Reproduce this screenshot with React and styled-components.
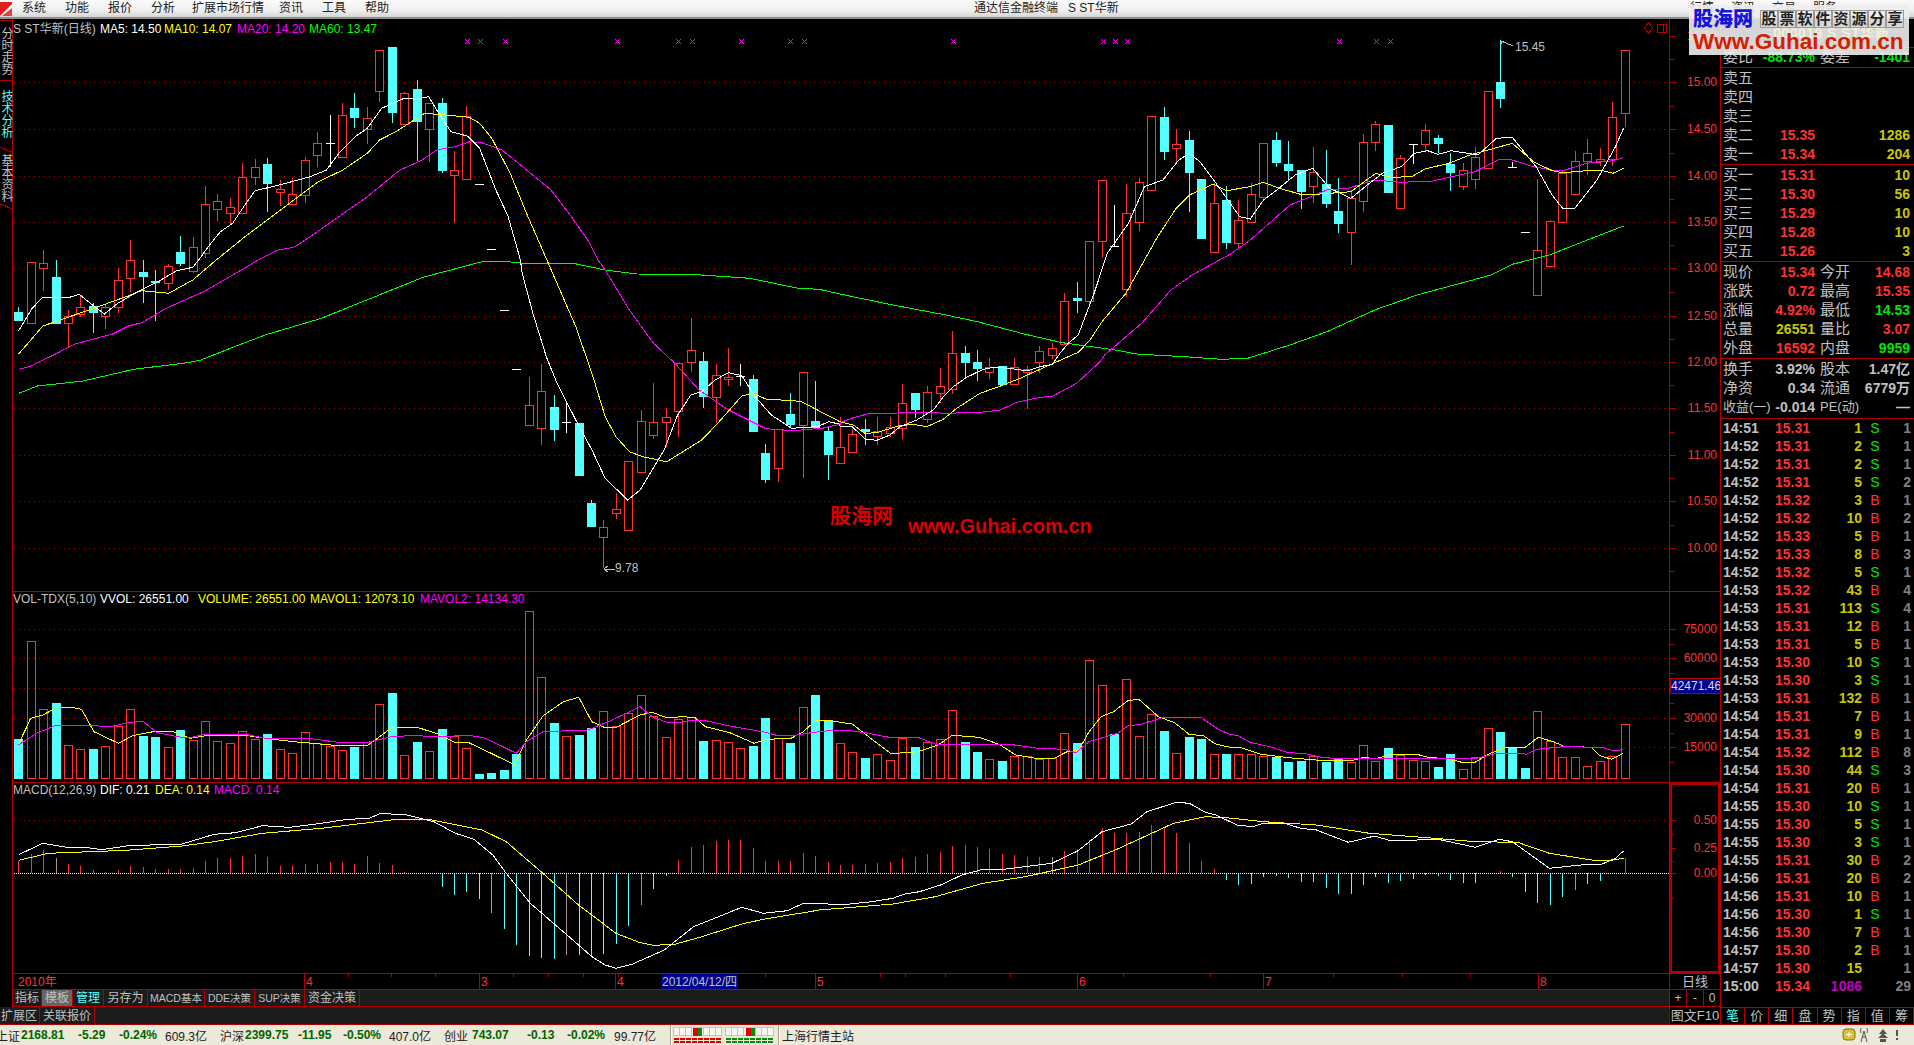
import React from 'react'
import styled, { createGlobalStyle } from 'styled-components'

const LINE = '#b00000'
const UP = '#ff3232'
const DOWN = '#54ffff'
const CJK = '"Liberation Sans", "Noto Sans CJK SC", sans-serif'
const THIN = '1'

const GlobalStyle = createGlobalStyle`
    html, body {
        margin: 0;
        padding: 0;
        background: #000;
        overflow: hidden;
    }
    * {
        box-sizing: border-box;
    }
`

// every polyline was read off the reference in its own crop, so each has its own scale
const crop1 = (p) => [p[0] / 2.45, p[1] / 3]
const crop8 = (p) => [p[0] / 1.867, 240 + p[1] / 3]
const crop9 = (p) => [840 + p[0] / 1.889, 20 + p[1] / 3]
const crop12 = (p) => [820 + p[0] / 3, 340 + p[1] / 3]
const vol5 = (p) => [p[0] / 2.45, 590 + p[1] / 3]
const vol6 = (p) => [640 + p[0] / 2.45, 590 + p[1] / 3]
const vol7 = (p) => [1230 + p[0] / 3, 590 + p[1] / 3]
const macd10 = (p) => [p[0] / 1.867, 780 + p[1] / 3]
const macd11 = (p) => [840 + p[0] / 1.889, 780 + p[1] / 3]

const toPoints = (...parts) => parts
    .map(([fn, list]) => list.map((p) => fn(p).map((v) => v.toFixed(1)).join(',')).join(' '))
    .join(' ')

const MA5 = toPoints(
    [crop8, [[35, 272], [60, 205], [80, 172], [130, 172], [148, 163], [175, 198], [195, 222], [220, 190], [260, 152], [300, 120], [330, 92], [360, 82]]],
    [crop1, [[490, 775], [510, 740], [540, 695], [570, 670], [600, 615], [625, 572], [650, 565], [700, 550], [760, 530], [800, 510], [830, 460], [870, 410], [900, 385], [935, 325], [990, 295], [1020, 298], [1050, 290], [1075, 340], [1105, 395], [1145, 408], [1175, 445], [1215, 570], [1245, 650], [1275, 780]]],
    [crop8, [[975, 100], [995, 220], [1020, 350], [1040, 430], [1075, 540], [1105, 630], [1130, 715], [1172, 780], [1195, 750], [1240, 630], [1265, 525], [1290, 465], [1310, 455], [1335, 420], [1360, 398], [1385, 407], [1410, 470], [1440, 525], [1478, 565], [1525, 560], [1548, 545], [1568, 553]]],
    [crop12, [[60, 258], [97, 260], [135, 297], [170, 301], [210, 285], [240, 260], [290, 240], [340, 210], [370, 170], [400, 140], [440, 112], [490, 88], [520, 82], [570, 85], [620, 93], [660, 80], [697, 73], [720, 40], [745, 10]]],
    [crop9, [[450, 945], [480, 820], [505, 700], [545, 610], [575, 500], [610, 480], [640, 420], [660, 400], [680, 425], [715, 500], [755, 590], [775, 597], [800, 540], [825, 510], [860, 465], [893, 445], [925, 505], [965, 535], [1000, 490], [1025, 460], [1060, 440], [1085, 400], [1110, 392], [1130, 403], [1155, 392], [1205, 405], [1240, 355], [1270, 352], [1315, 440], [1345, 525], [1365, 565], [1388, 565], [1430, 480], [1465, 380], [1480, 325]]],
)

const MA10 = toPoints(
    [crop8, [[35, 342], [80, 258], [130, 230], [175, 205], [235, 170], [265, 152], [315, 160], [360, 120], [400, 65]]],
    [crop1, [[535, 775], [600, 710], [720, 600], [780, 545], [840, 510], [900, 460], [930, 420], [970, 395], [1040, 340], [1090, 345], [1150, 352], [1175, 370], [1205, 415], [1250, 520], [1290, 640], [1340, 780]]],
    [crop8, [[1040, 130], [1075, 260], [1105, 400], [1130, 530], [1150, 590], [1175, 635], [1200, 650], [1245, 665], [1310, 600], [1340, 550], [1385, 468], [1405, 460], [1430, 477], [1495, 484], [1568, 545]]],
    [crop12, [[60, 245], [100, 255], [135, 280], [170, 278], [235, 258], [280, 253], [320, 260], [370, 238], [410, 205], [480, 160], [550, 135], [600, 115], [700, 70], [775, 37], [810, 0]]],
    [crop9, [[495, 905], [540, 820], [570, 735], [600, 650], [635, 565], [660, 525], [705, 492], [730, 512], [775, 500], [800, 487], [830, 505], [870, 523], [900, 523], [965, 515], [1012, 460], [1040, 472], [1080, 470], [1105, 447], [1150, 430], [1190, 405], [1270, 370], [1310, 425], [1345, 452], [1365, 458], [1410, 452], [1440, 452], [1460, 460], [1480, 445]]],
)

const MA20 = toPoints(
    [crop8, [[35, 388], [55, 380], [100, 345], [140, 312], [210, 282], [240, 258], [265, 248], [310, 205], [380, 155], [440, 100]]],
    [crop1, [[640, 775], [680, 750], [720, 742], [760, 710], [830, 650], [900, 590], [930, 560], [980, 510], [1030, 483], [1070, 450], [1115, 440], [1150, 425], [1180, 428], [1230, 450], [1300, 520], [1350, 570], [1400, 650], [1440, 720], [1465, 780]]],
    [crop8, [[1130, 90], [1175, 210], [1220, 310], [1260, 370], [1305, 450], [1360, 510], [1410, 550], [1430, 566], [1480, 572], [1535, 565], [1568, 553]]],
    [crop12, [[60, 248], [100, 233], [150, 220], [235, 219], [300, 217], [385, 220], [490, 216], [540, 210], [590, 187], [660, 172], [697, 169], [770, 130], [840, 65]]],
    [crop9, [[500, 1005], [570, 910], [625, 810], [665, 765], [740, 700], [775, 660], [850, 555], [920, 510], [960, 505], [1010, 480], [1060, 487], [1120, 483], [1170, 465], [1200, 455], [1245, 418], [1270, 420], [1310, 440], [1345, 450], [1370, 450], [1410, 430], [1460, 422], [1480, 413]]],
)

const MA60 = toPoints(
    [crop8, [[35, 460], [70, 438], [155, 423], [250, 388], [350, 368], [375, 360], [430, 325], [495, 285], [600, 235], [700, 170], [790, 112], [900, 65], [950, 65], [975, 70], [1070, 70], [1130, 90], [1190, 102], [1300, 104], [1400, 115], [1490, 145], [1530, 148], [1568, 162]]],
    [crop9, [[100, 855], [200, 885], [260, 905], [350, 943], [420, 968], [520, 990], [560, 1002], [650, 1010], [720, 1018], [770, 1015], [850, 975], [920, 935], [1010, 870], [1090, 825], [1160, 795], [1230, 765], [1270, 733], [1340, 705], [1420, 655], [1480, 618]]],
)

const MAVOL1 = toPoints(
    [vol5, [[45, 462], [62, 420], [75, 385], [105, 375], [140, 352], [175, 352], [200, 358], [230, 425], [290, 460], [325, 437], [375, 425], [425, 425], [465, 445], [510, 436], [600, 436], [660, 447], [720, 455], [830, 467], [900, 467], [960, 413], [1020, 411], [1075, 433], [1115, 458], [1145, 456], [1190, 482], [1260, 524], [1290, 450], [1330, 378], [1380, 335], [1418, 322], [1450, 395], [1480, 412], [1510, 412]]],
    [vol6, [[0, 375], [30, 367], [65, 383], [105, 380], [135, 383], [160, 410], [220, 428], [280, 460], [310, 448], [370, 445], [400, 425], [430, 392], [465, 392], [520, 402], [560, 440], [615, 491], [680, 485], [730, 465], [765, 436], [830, 442], [880, 463], [920, 495], [970, 505], [1015, 505], [1045, 486], [1075, 480], [1100, 425], [1130, 380], [1160, 365], [1195, 332], [1222, 328], [1270, 380], [1310, 398], [1345, 433], [1380, 437], [1410, 462]]],
    [vol7, [[0, 472], [30, 472], [90, 492], [150, 500], [195, 505], [270, 511], [370, 511], [395, 503], [440, 505], [490, 493], [560, 493], [600, 503], [640, 505], [680, 513], [695, 517], [735, 517], [780, 490], [830, 472], [885, 472], [925, 442], [970, 455], [1000, 468], [1050, 470], [1085, 473], [1110, 497], [1145, 508], [1180, 490]]],
)

const MAVOL2 = toPoints(
    [vol5, [[45, 465], [90, 430], [135, 407], [235, 407], [265, 411], [320, 397], [350, 394], [385, 428], [440, 441], [470, 442], [500, 433], [600, 433], [650, 445], [760, 446], [830, 457], [900, 457], [960, 440], [1020, 436], [1060, 441], [1150, 436], [1190, 445], [1265, 490], [1290, 455], [1330, 425], [1440, 420], [1500, 390]]],
    [vol6, [[0, 350], [30, 380], [65, 397], [100, 397], [130, 390], [165, 393], [220, 408], [300, 425], [335, 436], [380, 436], [420, 428], [470, 421], [510, 421], [560, 430], [610, 442], [680, 442], [730, 465], [870, 463], [905, 463], [975, 475], [1040, 478], [1068, 488], [1100, 455], [1170, 430], [1195, 408], [1230, 402], [1280, 383], [1375, 383], [1420, 420]]],
    [vol7, [[0, 433], [25, 437], [60, 457], [120, 470], [170, 487], [230, 492], [280, 503], [320, 505], [640, 505], [740, 505], [800, 490], [870, 490], [890, 493], [920, 478], [970, 473], [1000, 470], [1115, 472], [1145, 481], [1165, 481], [1180, 478]]],
)

const DIF = toPoints(
    [macd10, [[35, 224], [80, 190], [125, 202], [160, 202], [190, 209], [240, 197], [340, 192], [400, 163], [440, 158], [490, 137], [540, 142], [590, 132], [650, 118], [690, 115], [710, 100], [760, 105], [810, 125], [850, 160], [885, 178], [920, 225], [945, 280], [990, 370], [1055, 460], [1105, 530], [1130, 555], [1150, 565], [1180, 553], [1240, 510], [1295, 440], [1385, 382], [1425, 400], [1470, 392], [1500, 370], [1530, 370]]],
    [macd11, [[0, 375], [60, 365], [100, 355], [120, 343], [150, 335], [190, 315], [230, 285], [270, 268], [310, 268], [400, 250], [450, 212], [495, 155], [550, 132], [580, 95], [635, 67], [660, 70], [690, 97], [710, 105], [750, 135], [780, 140], [800, 130], [840, 130], [870, 145], [900, 150], [960, 187], [1010, 168], [1035, 180], [1090, 180], [1130, 178], [1200, 202], [1245, 178], [1270, 185], [1340, 265], [1400, 255], [1440, 252], [1465, 235], [1480, 213]]],
)

const DEA = toPoints(
    [macd10, [[35, 241], [90, 220], [235, 211], [340, 198], [400, 185], [490, 160], [600, 145], [730, 120], [800, 118], [900, 150], [945, 185], [1010, 275], [1080, 375], [1150, 460], [1195, 488], [1220, 496], [1260, 493], [1310, 470], [1385, 432], [1425, 418], [1500, 398], [1530, 390]]],
    [macd11, [[0, 385], [100, 372], [180, 350], [270, 310], [350, 290], [450, 255], [520, 210], [630, 130], [690, 110], [730, 113], [800, 125], [900, 135], [1000, 160], [1100, 172], [1200, 185], [1280, 187], [1340, 220], [1420, 240], [1460, 240], [1480, 235]]],
)

// kind, high, body top, body bottom, low as page y
const CANDLES = [
    ['c', 307, 312, 321, 321], ['r', 262, 262, 323, 323], ['r', 250, 263, 268, 291], ['c', 260, 277, 324, 324], ['r', 310, 316, 323, 347],
    ['r', 295, 307, 314, 317], ['c', 303, 306, 313, 333], ['r', 305, 307, 316, 329], ['r', 268, 280, 307, 313], ['r', 240, 260, 278, 292],
    ['c', 260, 272, 277, 303], ['c', 270, 281, 283, 321], ['r', 264, 266, 283, 290], ['c', 236, 252, 264, 266], ['r', 237, 247, 271, 273],
    ['r', 186, 204, 253, 258], ['r', 194, 201, 209, 221], ['r', 198, 207, 213, 224], ['r', 163, 177, 213, 213], ['r', 159, 167, 177, 185],
    ['c', 158, 164, 184, 212], ['r', 180, 189, 192, 206], ['r', 178, 194, 204, 204], ['r', 157, 160, 195, 203], ['r', 132, 143, 155, 167],
    ['w', 115, 143, 143, 167], ['r', 103, 115, 157, 157], ['c', 93, 108, 118, 128], ['r', 107, 118, 129, 144], ['r', 50, 50, 91, 102],
    ['c', 47, 47, 113, 123], ['r', 92, 93, 124, 124], ['c', 80, 89, 122, 161], ['r', 103, 103, 129, 162], ['c', 98, 103, 171, 173],
    ['r', 151, 170, 175, 223], ['r', 106, 116, 179, 179], ['w', 184, 184, 184, 184], ['w', 249, 249, 249, 249], ['w', 310, 310, 310, 310],
    ['w', 369, 369, 369, 369], ['r', 377, 405, 425, 425], ['r', 364, 391, 428, 445], ['c', 395, 407, 430, 441], ['w', 403, 422, 422, 433],
    ['c', 423, 423, 476, 476], ['c', 500, 503, 527, 527], ['r', 520, 527, 537, 568], ['r', 493, 509, 513, 519], ['r', 461, 461, 530, 530],
    ['r', 410, 421, 472, 472], ['r', 383, 422, 435, 439], ['r', 408, 417, 422, 447], ['r', 363, 363, 411, 437], ['r', 318, 350, 362, 372],
    ['c', 352, 361, 397, 408], ['r', 364, 375, 397, 423], ['r', 348, 377, 379, 386], ['w', 364, 376, 376, 386], ['c', 375, 379, 432, 432],
    ['c', 444, 453, 480, 483], ['r', 429, 429, 468, 482], ['c', 393, 414, 425, 428], ['r', 372, 372, 425, 478], ['c', 381, 421, 428, 428],
    ['c', 426, 431, 455, 480], ['r', 417, 447, 463, 463], ['r', 429, 434, 452, 452], ['c', 419, 429, 432, 445], ['r', 417, 431, 436, 445],
    ['r', 417, 427, 433, 437], ['r', 384, 403, 428, 439], ['c', 393, 393, 410, 418], ['r', 386, 392, 419, 423], ['r', 368, 386, 393, 403],
    ['r', 331, 353, 389, 394], ['c', 346, 353, 363, 378], ['c', 350, 362, 369, 381], ['r', 358, 367, 372, 379], ['c', 366, 366, 385, 385],
    ['r', 358, 367, 384, 384], ['r', 366, 369, 372, 409], ['r', 346, 351, 362, 373], ['r', 343, 348, 355, 359], ['r', 293, 301, 344, 344],
    ['c', 282, 298, 301, 313], ['r', 241, 241, 301, 307], ['r', 180, 180, 241, 258], ['w', 205, 246, 246, 246], ['r', 184, 213, 289, 297],
    ['r', 178, 182, 222, 231], ['r', 116, 116, 190, 190], ['c', 107, 117, 152, 160], ['r', 129, 144, 148, 163], ['c', 131, 140, 173, 212],
    ['c', 179, 179, 239, 239], ['r', 183, 203, 252, 252], ['c', 186, 200, 243, 249], ['r', 200, 220, 243, 249], ['r', 183, 194, 222, 222],
    ['r', 143, 143, 197, 197], ['c', 132, 140, 163, 167], ['c', 141, 164, 171, 180], ['c', 170, 170, 192, 209], ['r', 147, 172, 186, 203],
    ['c', 150, 184, 204, 208], ['c', 178, 211, 224, 233], ['r', 190, 198, 232, 265], ['r', 134, 142, 201, 212], ['r', 121, 124, 142, 151],
    ['c', 125, 125, 193, 193], ['r', 155, 158, 208, 208], ['w', 144, 144, 144, 164], ['r', 124, 130, 144, 152], ['c', 135, 138, 144, 153],
    ['c', 153, 164, 173, 191], ['r', 163, 170, 186, 190], ['r', 147, 157, 179, 189], ['r', 91, 91, 168, 168], ['c', 40, 82, 99, 108],
    ['w', 162, 167, 167, 167], ['w', 232, 232, 232, 232], ['r', 179, 250, 295, 295], ['r', 220, 221, 266, 266], ['r', 171, 173, 222, 222],
    ['r', 151, 161, 194, 194], ['r', 139, 153, 161, 175], ['r', 148, 159, 161, 166], ['r', 102, 117, 159, 166], ['r', 50, 50, 113, 127],
]

const VOL_TOPS = [
    739, 641, 709, 703, 745, 749, 749, 746, 726, 709, 736, 737, 747, 730, 740, 721, 741, 743, 731, 739,
    734, 749, 753, 732, 743, 746, 750, 747, 742, 704, 693, 755, 742, 751, 729, 736, 748, 774, 773, 770,
    754, 611, 677, 723, 736, 735, 728, 711, 726, 713, 695, 716, 737, 719, 717, 741, 740, 742, 748, 746,
    718, 738, 743, 707, 695, 720, 743, 752, 758, 754, 760, 738, 747, 742, 739, 710, 742, 752, 759, 761,
    756, 756, 759, 758, 733, 743, 660, 685, 734, 679, 736, 714, 731, 753, 737, 739, 754, 754, 754, 754,
    756, 757, 762, 761, 756, 762, 759, 762, 745, 761, 748, 755, 760, 761, 767, 754, 769, 757, 728, 732,
    748, 768, 711, 741, 757, 757, 766, 761, 756, 724,
]

const VOL_CYAN = new Set([0, 3, 6, 10, 11, 13, 20, 27, 30, 32, 34, 37, 38, 39, 40, 43, 45, 46, 55, 59, 60, 62, 64, 65, 68, 72, 76, 77, 79, 85, 88, 92, 94, 95, 97, 101, 102, 103, 105, 106, 110, 114, 115, 119, 120, 121])

// end of each MACD stem in crop units, 280 is the zero line
const MACD_BARS = [
    243, 222, 210, 235, 252, 258, 270, 276, 270, 258, 262, 267, 267, 267, 265, 244, 235, 235, 228, 222,
    232, 258, 258, 252, 252, 246, 246, 252, 228, 250, 256, 276, 278, 280, 320, 345, 336, 357, 398, 446,
    495, 528, 534, 537, 525, 525, 527, 522, 492, 438, 375, 327, 288, 240, 200, 195, 183, 180, 180, 204,
    243, 243, 243, 219, 228, 246, 255, 255, 252, 249, 246, 234, 231, 222, 216, 198, 195, 201, 207, 222,
    225, 231, 231, 231, 213, 207, 180, 144, 159, 159, 156, 135, 144, 159, 189, 243, 267, 300, 315, 312,
    291, 288, 294, 306, 306, 324, 342, 342, 315, 291, 309, 303, 297, 285, 288, 300, 309, 309, 282, 273,
    291, 336, 369, 375, 351, 330, 312, 303, 280, 234,
]
const MACD_DIM = new Set([3, 38, 44, 50, 83, 125])

const PRICE_TICKS = [
    [36, '15.50'], [82, '15.00'], [129, '14.50'], [176, '14.00'], [222, '13.50'], [268, '13.00'],
    [316, '12.50'], [362, '12.00'], [408, '11.50'], [455, '11.00'], [501, '10.50'], [548, '10.00'],
]
const VOL_TICKS = [[629, '75000'], [658, '60000'], [688, ''], [718, '30000'], [747, '15000']]
const MACD_TICKS = [[820, '0.50'], [848, '0.25'], [873, '0.00']]
const MARKS = [467, 480, 505, 617, 678, 692, 741, 790, 804, 953, 1103, 1115, 1127, 1339, 1376, 1390]

const SELL = [['卖五'], ['卖四'], ['卖三'], ['卖二', '15.35', '1286'], ['卖一', '15.34', '204']]
const BUY = [['买一', '15.31', '10'], ['买二', '15.30', '56'], ['买三', '15.29', '10'], ['买四', '15.28', '10'], ['买五', '15.26', '3']]

const TICKS = [
    ['14:51', '15.31', '1', 'S', '1'], ['14:52', '15.31', '2', 'S', '1'], ['14:52', '15.31', '2', 'S', '1'], ['14:52', '15.31', '5', 'S', '2'],
    ['14:52', '15.32', '3', 'B', '1'], ['14:52', '15.32', '10', 'B', '2'], ['14:52', '15.33', '5', 'B', '1'], ['14:52', '15.33', '8', 'B', '3'],
    ['14:52', '15.32', '5', 'S', '1'], ['14:53', '15.32', '43', 'B', '4'], ['14:53', '15.31', '113', 'S', '4'], ['14:53', '15.31', '12', 'B', '1'],
    ['14:53', '15.31', '5', 'B', '1'], ['14:53', '15.30', '10', 'S', '1'], ['14:53', '15.30', '3', 'S', '1'], ['14:53', '15.31', '132', 'B', '1'],
    ['14:54', '15.31', '7', 'B', '1'], ['14:54', '15.31', '9', 'B', '1'], ['14:54', '15.32', '112', 'B', '8'], ['14:54', '15.30', '44', 'S', '3'],
    ['14:54', '15.31', '20', 'B', '1'], ['14:55', '15.30', '10', 'S', '1'], ['14:55', '15.30', '5', 'S', '1'], ['14:55', '15.30', '3', 'S', '1'],
    ['14:55', '15.31', '30', 'B', '2'], ['14:56', '15.31', '20', 'B', '2'], ['14:56', '15.31', '10', 'B', '1'], ['14:56', '15.30', '1', 'S', '1'],
    ['14:56', '15.30', '7', 'B', '1'], ['14:57', '15.30', '2', 'B', '1'], ['14:57', '15.30', '15', '', '1'], ['15:00', '15.34', '1086', '', '29'],
]

const MENU = ['系统', '功能', '报价', '分析', '扩展市场行情', '资讯', '工具', '帮助']
const TOOLS = [['指标', 29], ['模板', 31, 'on'], ['管理', 31, 'cyan'], ['另存为', 44], ['MACD基本', 57, 'small'], ['DDE决策', 50, 'small'], ['SUP决策', 50, 'small'], ['资金决策', 55]]
const SIDE_TICKS = ['笔', '价', '细', '盘', '势', '指', '值', '筹']

const Root = styled.div`
    position: relative;
    width: 1914px;
    height: 1045px;
    display: flex;
    flex-direction: column;
    background: #000;
    color: #c0c0c0;
    font-family: ${CJK};
    overflow: hidden;
`

const TopBar = styled.div`
    height: 19px;
    flex: none;
    display: grid;
    grid-template-columns: 974px 1fr 224px;
    align-items: center;
    background: linear-gradient(#fafafa, #f0f0f0 60%, #d6d6d6);
    border-bottom: 2px solid #8c8c8c;
    color: #222;
    font-size: 12px;
    line-height: 17px;
`

const Menu = styled.div`
    display: flex;
    align-items: center;
    height: 100%;
    gap: 19px;
`

const AppIcon = styled.svg`
    width: 12px;
    height: 14px;
    margin-right: -9px;
    flex: none;
`

const MenuItem = styled.span`
    margin-right: ${(p) => (p.$wide ? '-4px' : '0')};
    margin-left: ${(p) => (p.$wide ? '-2px' : '0')};
`

const TopRight = styled.div`
    display: flex;
    align-items: center;
    gap: 17px;
    height: 100%;
`

const Workspace = styled.div`
    display: flex;
    height: 1006px;
    flex: none;
`

const LeftGroup = styled.div`
    width: 1720px;
    flex: none;
    display: flex;
    flex-direction: column;
`

const UpperRow = styled.div`
    display: flex;
    height: 988px;
`

const SideColumn = styled.div`
    width: 13px;
    flex: none;
    padding-top: 1px;
    border-right: 1px solid ${LINE};
`

const SideTab = styled.div`
    height: ${(p) => p.$h}px;
    writing-mode: vertical-rl;
    text-orientation: upright;
    display: flex;
    align-items: center;
    justify-content: center;
    font-size: 12px;
    line-height: 12px;
    letter-spacing: 0;
    color: ${(p) => (p.$active ? DOWN : '#c0c0c0')};
    border-top: ${(p) => (p.$boxed ? `1px solid ${LINE}` : 'none')};
    border-bottom: ${(p) => (p.$boxed ? `1px solid ${LINE}` : 'none')};
    background: ${(p) => (p.$slant
        ? `linear-gradient(to bottom left, transparent 46%, ${LINE} 46%, ${LINE} 58%, transparent 58%) top / 12px 5px no-repeat,
           linear-gradient(to top right, transparent 46%, ${LINE} 46%, ${LINE} 58%, transparent 58%) bottom / 12px 5px no-repeat`
        : 'none')};
`

const Charts = styled.div`
    flex: 1;
    min-width: 0;
    display: flex;
    flex-direction: column;
`

const Pane = styled.div`
    position: relative;
    height: ${(p) => p.$h}px;
    flex: none;
    border-bottom: 1px solid ${LINE};
`

const PaneHeader = styled.div`
    position: absolute;
    top: ${(p) => p.$top}px;
    left: 0;
    display: flex;
    font-size: 12px;
    line-height: 16px;
    white-space: nowrap;
`

const Legend = styled.span`
    flex: ${(p) => (p.$w ? `0 0 ${p.$w}px` : 'none')};
    color: ${(p) => p.$c};
`

const Plot = styled.svg`
    display: block;
    shape-rendering: crispEdges;
    text {
        font-family: ${CJK};
        font-size: 12px;
        dominant-baseline: central;
    }
`

const Watermark = styled.div`
    position: absolute;
    left: 817px;
    top: 485px;
    display: flex;
    align-items: flex-end;
    gap: 15px;
    color: #dc0000;
    white-space: nowrap;
`

const WatermarkCn = styled.span`
    font-size: 21px;
    line-height: 24px;
    font-weight: 700;
`

const WatermarkEn = styled.span`
    font-size: 20px;
    line-height: 22px;
    font-weight: 700;
    transform: translateY(9px);
`

const RowLine = styled.div`
    display: flex;
    height: ${(p) => p.$h}px;
    flex: none;
    border-bottom: 1px solid ${LINE};
    background: ${(p) => p.$bg || 'transparent'};
`

const DateStrip = styled(Plot)`
    flex: none;
`

const AxisCell = styled.div`
    width: 51px;
    flex: none;
    margin-left: auto;
    display: flex;
    align-items: center;
    justify-content: center;
    border-left: 1px solid ${LINE};
    background: #000;
    font-size: 13px;
    line-height: 14px;
`

const StepCell = styled.span`
    flex: 1;
    height: 100%;
    display: flex;
    align-items: center;
    justify-content: center;
    border-right: ${(p) => (p.$last ? 'none' : `1px solid ${LINE}`)};
    font-size: 12px;
`

const ToolTab = styled.div`
    width: ${(p) => p.$w}px;
    flex: none;
    display: flex;
    align-items: center;
    justify-content: center;
    border-right: 1px solid ${LINE};
    font-size: ${(p) => (p.$kind === 'small' ? '10.5px' : '12px')};
    line-height: 14px;
    white-space: nowrap;
    overflow: hidden;
    color: ${(p) => (p.$kind === 'cyan' ? DOWN : '#c0c0c0')};
    background: ${(p) => (p.$kind === 'on' ? '#666' : 'transparent')};
`

const ExtTab = styled(ToolTab)`
    justify-content: ${(p) => (p.$clip ? 'flex-end' : 'center')};
    padding-right: ${(p) => (p.$clip ? '2px' : '0')};
`

const RightPanel = styled.div`
    flex: 1;
    display: flex;
    flex-direction: column;
    border-left: 1px solid ${LINE};
`

const CodeRow = styled.div`
    height: 29px;
    flex: none;
    padding: 6px 0 0 52px;
    border-bottom: 1px solid ${LINE};
    color: #ffff00;
    font-size: 14px;
    line-height: 16px;
    font-weight: 700;
    letter-spacing: 0.5px;
`

const Group = styled.div`
    flex: none;
    padding: ${(p) => (p.$flush ? 0 : 1)}px 0 ${(p) => (p.$pad ? 1 : 0)}px;
    border-bottom: 1px solid ${LINE};
`

const QuoteRow = styled.div`
    height: 19px;
    display: grid;
    grid-template-columns: 92px 90px;
    column-gap: 5px;
    padding-left: 2px;
    align-items: center;
`

const Half = styled.div`
    display: flex;
    justify-content: space-between;
    align-items: center;
    white-space: nowrap;
`

const Label = styled.span`
    font-size: ${(p) => (p.$small ? 13 : 15)}px;
    line-height: 19px;
    margin-top: -2px;
    color: #c0c0c0;
`

const Value = styled.span`
    font-size: 14px;
    line-height: 19px;
    font-weight: 700;
    color: ${(p) => p.$c};
`

const TickList = styled.div`
    flex: 1;
`

const TickRow = styled.div`
    height: 18px;
    display: grid;
    grid-template-columns: 52px 40px 47px 26px 23px;
    padding-left: 2px;
    align-items: center;
    font-size: 14px;
    line-height: 18px;
    font-weight: 700;
`

const TickCell = styled.span`
    color: ${(p) => p.$c};
    text-align: ${(p) => p.$align || 'left'};
    font-weight: ${(p) => (p.$thin ? 400 : 700)};
`

const SideTabs = styled.div`
    height: 18px;
    flex: none;
    display: grid;
    grid-template-columns: repeat(8, 1fr);
    border-top: 1px solid ${LINE};
    border-bottom: 1px solid ${LINE};
`

const SideTabItem = styled.span`
    display: flex;
    align-items: center;
    justify-content: center;
    font-size: 13px;
    line-height: 14px;
    color: ${(p) => (p.$on ? DOWN : '#c0c0c0')};
    border-right: 1px solid ${LINE};
`

const StatusBar = styled.div`
    flex: 1;
    display: flex;
    align-items: center;
    background: #ece9d8;
    color: #222;
    font-size: 12px;
    white-space: nowrap;
`

const StatusCell = styled.span`
    flex: 0 0 ${(p) => p.$w}px;
    margin-left: ${(p) => p.$ml || 0}px;
    color: ${(p) => (p.$num ? '#006400' : '#222')};
    font-weight: ${(p) => (p.$num ? 700 : 400)};
`

const StatusDivider = styled.span`
    width: 2px;
    height: 20px;
    flex: none;
    border-left: 1px solid #a8a490;
    border-right: 1px solid #fff;
    margin: 0 1px;
`

const MiniBlockArt = styled.svg`
    flex: none;
    shape-rendering: crispEdges;
`

const Station = styled.span`
    margin-left: 1px;
`

const Tray = styled.svg`
    width: 72px;
    height: 20px;
    margin-left: auto;
    flex: none;
`

const Badge = styled.div`
    position: absolute;
    left: 1689px;
    top: 5px;
    width: 220px;
    height: 50px;
    padding: 3px 3px 0 4px;
    background: rgba(238, 238, 238, 0.9);
    display: flex;
    flex-direction: column;
`

const BadgeTop = styled.div`
    display: flex;
    align-items: center;
    height: 22px;
`

const BadgeName = styled.span`
    font-size: 20px;
    line-height: 22px;
    font-weight: 900;
    color: #1414dc;
    flex: 0 0 67px;
`

const BadgeChar = styled.span`
    width: 18px;
    height: 18px;
    flex: none;
    display: flex;
    align-items: center;
    justify-content: center;
    border: 1px solid #9a9a9a;
    font-size: 15px;
    line-height: 16px;
    font-weight: 700;
    color: #222;
`

const BadgeUrl = styled.span`
    font-size: 22.5px;
    line-height: 24px;
    font-weight: 700;
    color: #d42000;
    white-space: nowrap;
`

const cx = (i) => Math.round(18.2 + 12.452 * i)

const Grid = ({ ys }) => ys.map((y) => (
    <line key={y} x1="14" x2="1669" y1={y + 0.5} y2={y + 0.5} stroke="#c00000" strokeDasharray="1 4" />
))

const Axis = ({ y1, y2, ticks, step }) => {
    const minors = []
    for (let i = 0; i < ticks.length - 1; i++) minors.push(Math.round((ticks[i][0] + ticks[i + 1][0]) / 2))
    minors.push(ticks[ticks.length - 1][0] + step)
    return (
        <g>
            <line x1="1669.5" x2="1669.5" y1={y1} y2={y2} stroke={LINE} />
            {minors.map((y) => <line key={y} x1="1669" x2="1674" y1={y + 0.5} y2={y + 0.5} stroke={LINE} />)}
            {ticks.map(([y, label]) => (
                <g key={y}>
                    <line x1="1669" x2="1676" y1={y + 0.5} y2={y + 0.5} stroke={LINE} />
                    <text x="1717" y={y} textAnchor="end" fill={UP}>{label}</text>
                </g>
            ))}
        </g>
    )
}

const Candle = ({ data, i }) => {
    const [kind, high, top, bottom, low] = data
    const x = cx(i)
    if (kind === 'w') {
        return (
            <g stroke="#fff">
                <line x1={x - 4} x2={x + 5} y1={top + 0.5} y2={top + 0.5} />
                {high !== low && <line x1={x + 0.5} x2={x + 0.5} y1={high} y2={low} />}
            </g>
        )
    }
    const color = kind === 'r' ? UP : DOWN
    return (
        <g>
            <line x1={x + 0.5} x2={x + 0.5} y1={high} y2={top} stroke={color} />
            <line x1={x + 0.5} x2={x + 0.5} y1={bottom} y2={low} stroke={color} />
            {kind === 'r'
                ? <rect x={x - 3.5} y={top + 0.5} width="8" height={bottom - top} fill="#000" stroke={color} />
                : <rect x={x - 4} y={top} width="9" height={bottom - top} fill={color} />}
        </g>
    )
}

const Mark = ({ x }) => (
    <path d={`M${x - 2} 39L${x + 3} 44M${x + 3} 39L${x - 2} 44`} stroke="#ff00ff" fill="none" />
)

const MainChart = () => (
    <Plot width="1707" height="572" viewBox="13 19 1707 572">
        <Grid ys={PRICE_TICKS.slice(1).map((t) => t[0])} />
        {CANDLES.map((c, i) => <Candle key={i} data={c} i={i} />)}
        <polyline points={MA60} fill="none" stroke="#00ff00" strokeWidth={THIN} />
        <polyline points={MA20} fill="none" stroke="#ff00ff" strokeWidth={THIN} />
        <polyline points={MA10} fill="none" stroke="#ffff00" strokeWidth={THIN} />
        <polyline points={MA5} fill="none" stroke="#fff" strokeWidth={THIN} />
        {MARKS.map((x) => <Mark key={x} x={x} />)}
        <path d="M1501 41L1504 41M1501 41L1501 44M1501 41L1513 46" stroke="#c0c0c0" fill="none" />
        <text x="1515" y="47" fill="#c0c0c0">15.45</text>
        <path d="M604 569L615 569M604 569L608 566M604 569L608 572" stroke="#c0c0c0" fill="none" />
        <text x="615" y="568" fill="#c0c0c0">9.78</text>
        <Axis y1={19} y2={591} ticks={PRICE_TICKS} step={23} />
        <path d="M1648.5 23L1653 28L1648.5 33L1644 28Z" stroke={LINE} fill="none" />
        <path d="M1657.5 24.5H1666.5V32.5H1657.5ZM1663.5 24.5V32.5" stroke={LINE} fill="none" />
    </Plot>
)

const VolumeChart = () => (
    <Plot width="1707" height="190" viewBox="13 592 1707 190">
        <Grid ys={VOL_TICKS.map((t) => t[0])} />
        {VOL_TOPS.map((top, i) => {
            const x = cx(i)
            return VOL_CYAN.has(i)
                ? <rect key={i} x={x - 4} y={top} width="9" height={779 - top} fill={DOWN} />
                : <rect key={i} x={x - 3.5} y={top + 0.5} width="8" height={778 - top} fill="none" stroke={UP} />
        })}
        <polyline points={MAVOL1} fill="none" stroke="#ffff00" strokeWidth={THIN} />
        <polyline points={MAVOL2} fill="none" stroke="#ff00ff" strokeWidth={THIN} />
        <Axis y1={592} y2={782} ticks={VOL_TICKS} step={15} />
        <rect x="1670" y="678" width="50" height="15" fill="#00008b" stroke={LINE} />
        <text x="1671" y="686" fill="#d8d8d8">42471.46</text>
    </Plot>
)

const MacdChart = () => (
    <Plot width="1707" height="190" viewBox="13 783 1707 190">
        <line x1="14" x2="1669" y1="820.5" y2="820.5" stroke="#c00000" strokeDasharray="1 4" />
        {MACD_BARS.map((end, i) => {
            const y = 780 + end / 3
            const color = MACD_DIM.has(i) ? '#b09090' : end < 280 ? UP : DOWN
            return <line key={i} x1={cx(i) + 0.5} x2={cx(i) + 0.5} y1="873" y2={y} stroke={color} />
        })}
        <line x1="14" x2="1669" y1="873.5" y2="873.5" stroke="#fff" strokeDasharray="1 1" />
        <polyline points={DEA} fill="none" stroke="#ffff00" strokeWidth={THIN} />
        <polyline points={DIF} fill="none" stroke="#fff" strokeWidth={THIN} />
        <Axis y1={783} y2={973} ticks={MACD_TICKS} step={25} />
        <rect x="1671" y="784" width="48" height="188" fill="none" stroke={LINE} strokeWidth="2" />
    </Plot>
)

const DATE_MAJOR = [[304, '4'], [479, '3'], [615, '4'], [815, '5'], [1077, '6'], [1263, '7'], [1538, '8']]
const DATE_MINOR = [348, 391, 435, 513, 548, 583, 618, 712, 765, 880, 905, 945, 1010, 1123, 1210, 1333, 1402, 1470]

const DateAxis = () => (
    <DateStrip width="1656" height="15" viewBox="13 974 1656 15">
        <text x="18" y="982" fill={UP}>2010年</text>
        {DATE_MINOR.map((x) => <line key={x} x1={x + 0.5} x2={x + 0.5} y1="974" y2="977" stroke={LINE} />)}
        {DATE_MAJOR.map(([x, label]) => (
            <g key={x}>
                <line x1={x + 0.5} x2={x + 0.5} y1="974" y2="989" stroke={LINE} />
                <text x={x + 2} y="982" fill={UP}>{label}</text>
            </g>
        ))}
        <rect x="661" y="974" width="77" height="15" fill="#00008b" />
        <text x="662" y="982" fill="#c0c0c0" textLength="75">2012/04/12/四</text>
    </DateStrip>
)

const MiniBlocks = () => {
    const cells = [0, 1, 2, 3, 4, 5, 6, 7]
    return (
        <MiniBlockArt width="104" height="20" viewBox="0 0 104 20">
            {cells.map((c) => <rect key={`a${c}`} x={c * 6} y="2.5" width="6" height="8" fill="#f8f8f0" stroke="#c8c4b0" />)}
            {cells.map((c) => <rect key={`b${c}`} x={52 + c * 6} y="2.5" width="6" height="8" fill="#f8f8f0" stroke="#c8c4b0" />)}
            <rect x="20" y="3" width="5" height="8" fill="#e00000" />
            <rect x="25" y="3" width="4" height="8" fill="#0a8a0a" />
            <rect x="73" y="3" width="5" height="8" fill="#e00000" />
            <rect x="78" y="3" width="4" height="8" fill="#0a8a0a" />
            {cells.map((c) => <rect key={`c${c}`} x={1 + c * 6} y="13" width="5" height="2" fill="#e00000" />)}
            {cells.map((c) => <rect key={`d${c}`} x={1 + c * 6} y="16" width="5" height="2" fill="#e00000" />)}
            {cells.map((c) => <rect key={`e${c}`} x={53 + c * 6} y="13" width="5" height="2" fill="#0a8a0a" />)}
            {cells.map((c) => <rect key={`f${c}`} x={53 + c * 6} y="16" width="5" height="2" fill="#0a8a0a" />)}
        </MiniBlockArt>
    )
}

const Quote = ({ label, value, color, small }) => (
    <Half>
        <Label $small={small}>{label}</Label>
        <Value $c={color}>{value}</Value>
    </Half>
)

const BookRow = ({ row }) => (
    <QuoteRow>
        <Quote label={row[0]} value={row[1]} color={UP} />
        <Quote label="" value={row[2]} color="#c8c800" />
    </QuoteRow>
)

const App = () => (
    <Root>
        <GlobalStyle />
        <TopBar>
            <Menu>
                <AppIcon viewBox="0 0 12 14">
                    <rect width="12" height="14" fill="#e02020" />
                    <path d="M0 14L12 2V14Z" fill="#f4f4f4" />
                    <path d="M2 14L12 6V14Z" fill="#e04040" />
                </AppIcon>
                {MENU.map((m) => <MenuItem key={m} $wide={m.length > 2}>{m}</MenuItem>)}
            </Menu>
            <span>通达信金融终端&nbsp;&nbsp;&nbsp;S ST华新</span>
            <TopRight>
                <span>行情</span>
                <span>资讯</span>
                <span>交易</span>
                <span>服务</span>
            </TopRight>
        </TopBar>

        <Workspace>
            <LeftGroup>
                <UpperRow>
                    <SideColumn>
                        <SideTab $h={61} $boxed>分时走势</SideTab>
                        <SideTab $h={66} $active>技术分析</SideTab>
                        <SideTab $h={62} $slant>基本资料</SideTab>
                    </SideColumn>
                    <Charts>
                        <Pane $h={573}>
                            <MainChart />
                            <PaneHeader $top={2}>
                                <Legend $w={87} $c="#c0c0c0">S ST华新(日线)</Legend>
                                <Legend $w={64} $c="#fff">MA5: 14.50</Legend>
                                <Legend $w={73} $c="#ffff00">MA10: 14.07</Legend>
                                <Legend $w={72} $c="#ff00ff">MA20: 14.20</Legend>
                                <Legend $c="#00ff00">MA60: 13.47</Legend>
                            </PaneHeader>
                            <Watermark>
                                <WatermarkCn>股海网</WatermarkCn>
                                <WatermarkEn>www.Guhai.com.cn</WatermarkEn>
                            </Watermark>
                        </Pane>
                        <Pane $h={191}>
                            <VolumeChart />
                            <PaneHeader $top={-1}>
                                <Legend $w={87} $c="#c0c0c0">VOL-TDX(5,10)</Legend>
                                <Legend $w={98} $c="#fff">VVOL: 26551.00</Legend>
                                <Legend $w={112} $c="#ffff00">VOLUME: 26551.00</Legend>
                                <Legend $w={110} $c="#ffff00">MAVOL1: 12073.10</Legend>
                                <Legend $c="#ff00ff">MAVOL2: 14134.30</Legend>
                            </PaneHeader>
                        </Pane>
                        <Pane $h={191}>
                            <MacdChart />
                            <PaneHeader $top={-1}>
                                <Legend $w={87} $c="#c0c0c0">MACD(12,26,9)</Legend>
                                <Legend $w={55} $c="#fff">DIF: 0.21</Legend>
                                <Legend $w={59} $c="#ffff00">DEA: 0.14</Legend>
                                <Legend $c="#ff00ff">MACD: 0.14</Legend>
                            </PaneHeader>
                        </Pane>
                        <RowLine $h={16}>
                            <DateAxis />
                            <AxisCell>日线</AxisCell>
                        </RowLine>
                        <RowLine $h={17} $bg="#1c1c1c">
                            {TOOLS.map(([name, w, kind]) => <ToolTab key={name} $w={w} $kind={kind}>{name}</ToolTab>)}
                            <AxisCell>
                                <StepCell>+</StepCell>
                                <StepCell>-</StepCell>
                                <StepCell $last>0</StepCell>
                            </AxisCell>
                        </RowLine>
                    </Charts>
                </UpperRow>
                <RowLine $h={18} $bg="#1c1c1c">
                    <ExtTab $w={40} $clip>扩展区</ExtTab>
                    <ExtTab $w={55}>关联报价</ExtTab>
                    <AxisCell>图文F10</AxisCell>
                </RowLine>
            </LeftGroup>

            <RightPanel>
                <CodeRow>000019 S ST华新</CodeRow>
                <Group $flush>
                    <QuoteRow>
                        <Quote label="委比" value="-88.73%" color="#00e600" />
                        <Quote label="委差" value="-1401" color="#00e600" />
                    </QuoteRow>
                </Group>
                <Group>{SELL.map((r) => <BookRow key={r[0]} row={r} />)}</Group>
                <Group>{BUY.map((r) => <BookRow key={r[0]} row={r} />)}</Group>
                <Group>
                    <QuoteRow>
                        <Quote label="现价" value="15.34" color={UP} />
                        <Quote label="今开" value="14.68" color={UP} />
                    </QuoteRow>
                    <QuoteRow>
                        <Quote label="涨跌" value="0.72" color={UP} />
                        <Quote label="最高" value="15.35" color={UP} />
                    </QuoteRow>
                    <QuoteRow>
                        <Quote label="涨幅" value="4.92%" color={UP} />
                        <Quote label="最低" value="14.53" color="#00e600" />
                    </QuoteRow>
                    <QuoteRow>
                        <Quote label="总量" value="26551" color="#c8c800" />
                        <Quote label="量比" value="3.07" color={UP} />
                    </QuoteRow>
                    <QuoteRow>
                        <Quote label="外盘" value="16592" color={UP} />
                        <Quote label="内盘" value="9959" color="#00e600" />
                    </QuoteRow>
                </Group>
                <Group $pad>
                    <QuoteRow>
                        <Quote label="换手" value="3.92%" color="#c0c0c0" />
                        <Quote label="股本" value="1.47亿" color="#c0c0c0" />
                    </QuoteRow>
                    <QuoteRow>
                        <Quote label="净资" value="0.34" color="#c0c0c0" />
                        <Quote label="流通" value="6779万" color="#c0c0c0" />
                    </QuoteRow>
                    <QuoteRow>
                        <Quote label="收益(一)" value="-0.014" color="#c0c0c0" small />
                        <Quote label="PE(动)" value="—" color="#c0c0c0" small />
                    </QuoteRow>
                </Group>
                <TickList>
                    {TICKS.map(([time, price, vol, side, count], i) => (
                        <TickRow key={i}>
                            <TickCell $c="#c0c0c0">{time}</TickCell>
                            <TickCell $c={UP}>{price}</TickCell>
                            <TickCell $c={vol === '1086' ? '#c000c0' : '#c8c800'} $align="right">{vol}</TickCell>
                            <TickCell $c={side === 'S' ? '#00e600' : UP} $align="center" $thin>{side}</TickCell>
                            <TickCell $c="#808080" $align="right">{count}</TickCell>
                        </TickRow>
                    ))}
                </TickList>
                <SideTabs>
                    {SIDE_TICKS.map((t, i) => <SideTabItem key={t} $on={i === 0}>{t}</SideTabItem>)}
                </SideTabs>
            </RightPanel>
        </Workspace>

        <StatusBar>
            <StatusCell $w={25} $ml={-4}>上证</StatusCell>
            <StatusCell $w={57} $num>2168.81</StatusCell>
            <StatusCell $w={41} $num>-5.29</StatusCell>
            <StatusCell $w={46} $num>-0.24%</StatusCell>
            <StatusCell $w={55}>609.3亿</StatusCell>
            <StatusCell $w={25}>沪深</StatusCell>
            <StatusCell $w={53} $num>2399.75</StatusCell>
            <StatusCell $w={45} $num>-11.95</StatusCell>
            <StatusCell $w={46} $num>-0.50%</StatusCell>
            <StatusCell $w={55}>407.0亿</StatusCell>
            <StatusCell $w={28}>创业</StatusCell>
            <StatusCell $w={55} $num>743.07</StatusCell>
            <StatusCell $w={40} $num>-0.13</StatusCell>
            <StatusCell $w={47} $num>-0.02%</StatusCell>
            <StatusCell $w={55}>99.77亿</StatusCell>
            <StatusDivider />
            <MiniBlocks />
            <StatusDivider />
            <Station>上海行情主站</Station>
            <Tray viewBox="0 0 72 20">
                <rect x="1" y="4" width="12" height="11" rx="3" fill="#d8c030" stroke="#807010" />
                <path d="M4 9.5H10M7 7V12" stroke="#fff" />
                <path d="M22 6L19 17M22 6L25 17M20 12H24M19 3Q18 6 19 8M25 3Q26 6 25 8" stroke="#555" fill="none" />
                <path d="M41 4L37 9H45ZM41 8L36 13H46ZM38 14H44V17H38Z" fill="#555" />
                <path d="M54 5H56V11H54ZM54 13H56V15H54Z" fill="#555" />
            </Tray>
        </StatusBar>

        <Badge>
            <BadgeTop>
                <BadgeName>股海网</BadgeName>
                {'股票软件资源分享'.split('').map((c) => <BadgeChar key={c}>{c}</BadgeChar>)}
            </BadgeTop>
            <BadgeUrl>Www.Guhai.com.cn</BadgeUrl>
        </Badge>
    </Root>
)

export default App
